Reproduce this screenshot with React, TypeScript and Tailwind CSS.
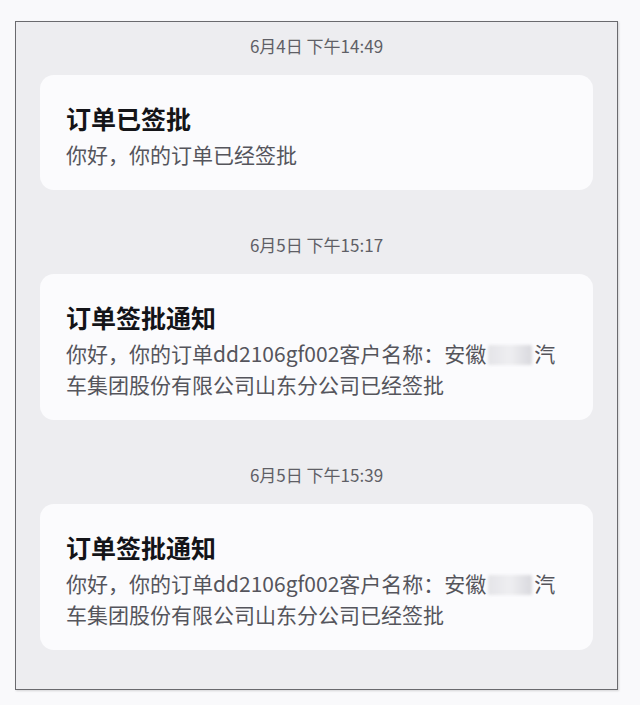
import React from "react";

interface Notice {
  time: string;
  title: string;
  body: React.ReactNode;
}

function Blurred(): React.ReactElement {
  return (
    <span className="mx-[2px] inline-block h-[20px] w-[44px] translate-y-[3px] rounded-[2px] bg-gradient-to-r from-[#e4e4e8] via-[#eeeef1] to-[#d9d9de] blur-[1.5px]" />
  );
}

const NOTICES: Notice[] = [
  {
    time: "6月4日 下午14:49",
    title: "订单已签批",
    body: "你好，你的订单已经签批",
  },
  {
    time: "6月5日 下午15:17",
    title: "订单签批通知",
    body: (
      <>
        你好，你的订单dd2106gf002客户名称：安徽
        <Blurred />汽
        <br />
        车集团股份有限公司山东分公司已经签批
      </>
    ),
  },
  {
    time: "6月5日 下午15:39",
    title: "订单签批通知",
    body: (
      <>
        你好，你的订单dd2106gf002客户名称：安徽
        <Blurred />汽
        <br />
        车集团股份有限公司山东分公司已经签批
      </>
    ),
  },
];

function NoticeCard({ notice }: { notice: Notice }): React.ReactElement {
  return (
    <div className="flex flex-col gap-[19px]">
      <div className="text-center text-[17px] leading-[20px] text-[#5f5f66]">{notice.time}</div>
      <div className="rounded-[14px] bg-[#fbfbfd] px-[26px] pt-[27px] pb-[20px]">
        <div className="text-[25px] font-semibold leading-[32px] text-[#141418]">{notice.title}</div>
        <div className="mt-[5px] whitespace-nowrap text-[21px] leading-[31px] text-[#55555c]">{notice.body}</div>
      </div>
    </div>
  );
}

export default function App(): React.ReactElement {
  return (
    <div
      className="min-h-[705px] bg-[#f9f9fb] pt-[21px]"
      style={{ fontFamily: '"Noto Sans CJK SC", "Noto Sans", sans-serif' }}
    >
      <div className="ml-[15px] w-[603px] border border-[#6a6a6e] bg-[#ededf0] px-[24px] pt-[14px] pb-[39px] shadow-[1px_1px_2px_rgba(0,0,0,0.15)]">
        <div className="flex flex-col gap-[45px]">
          {NOTICES.map((n, i) => (
            <NoticeCard key={i} notice={n} />
          ))}
        </div>
      </div>
    </div>
  );
}
